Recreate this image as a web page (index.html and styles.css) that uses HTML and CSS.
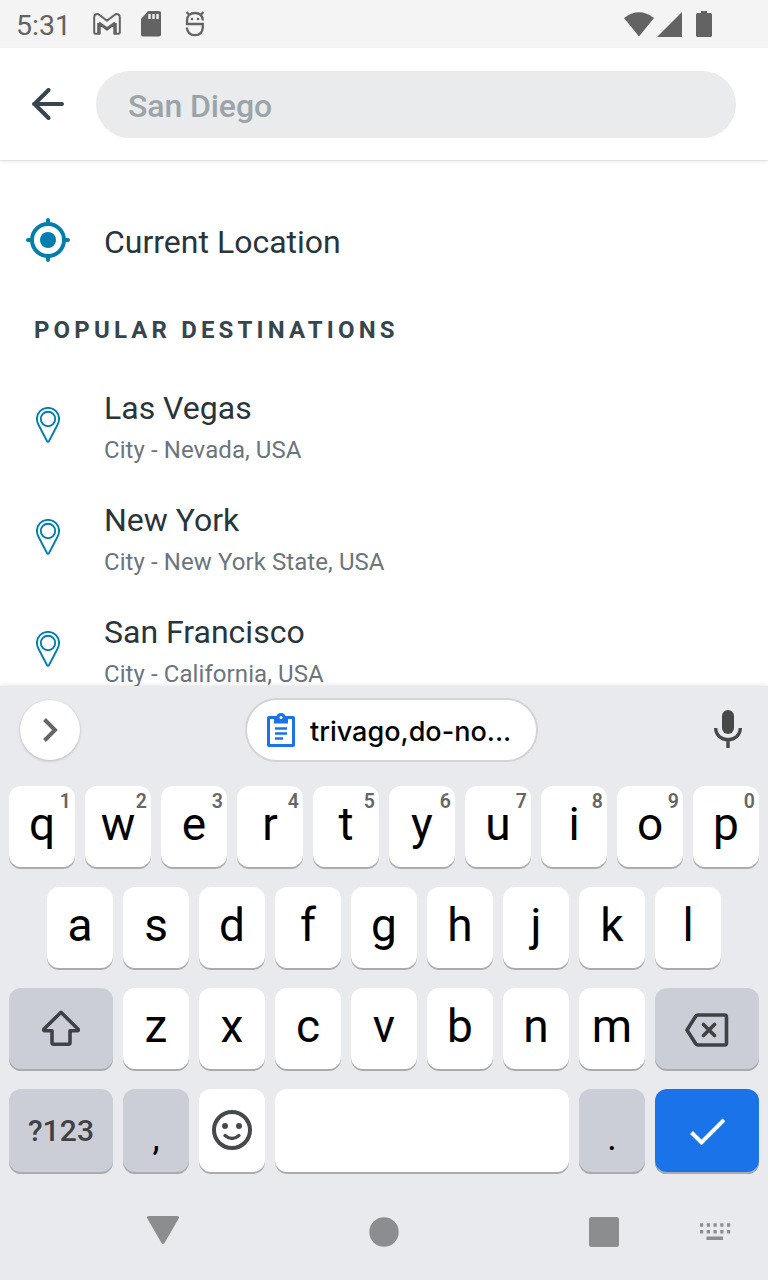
FILE: index.html
```html
<!DOCTYPE html>
<html lang="en">
<head>
<meta charset="utf-8">
<title>Destination search</title>
<link rel="stylesheet" href="styles.css">
</head>
<body>
<div class="screen">
  <div class="status">
    <span class="clock">5:31</span>
    <svg class="gmail" width="28" height="22" viewBox="0 0 28 22" fill="none" stroke="#636363" stroke-width="2" stroke-linejoin="round"><path d="M1.200 4C1.200 1 4.500 .3 6.500 2L14 7.800 21.500 2C23.500 .3 26.800 1 26.800 4V19.500Q26.800 20.800 25.500 20.800H21.300V11L14 16.800 6.700 11V20.800H2.500Q1.200 20.800 1.200 19.500Z"/><path d="M5.400 10v10M22.600 10v10M6 9.700L14 15.500 22 9.700" stroke-width="2.400"/></svg>
    <svg class="sd" width="20" height="26" viewBox="0 0 20 26"><path fill="#636363" d="M7 0h11q2 0 2 2v21.500q0 2-2 2H2q-2 0-2-2V8z"/><path d="M8.500 3v5M12.500 3v5M16.500 3v5" stroke="#f4f4f4" stroke-width="2.400"/></svg>
    <svg class="droid" width="20" height="26" viewBox="0 0 20 26" fill="none" stroke="#636363" stroke-width="2.300"><path d="M17.800 9.500C17.500 4.500 14.500 2 10 2S2 4.500 2 9.500V13H17.800V16.500C17.500 21.500 14.500 24.200 10 24.200S2.300 21.500 1.800 16.500M1.500 1l3.500 3.500M18.500 1L15 4.500"/><circle cx="7" cy="8" r="1.300" fill="#636363" stroke="none"/><circle cx="13" cy="8" r="1.300" fill="#636363" stroke="none"/></svg>
    <svg class="signals" width="90" height="28" viewBox="0 0 90 28" fill="#636363"><path d="M0 7Q15-4.500 30 7L15 25.500z"/><path d="M33 26L58 1V26z"/><path d="M77 0h6v2h3.500q1.500 0 1.500 1.500v21q0 1.500-1.500 1.500h-13q-1.500 0-1.500-1.500v-21q0-1.500 1.500-1.500H77z"/></svg>
  </div>
  <header class="header">
    <svg class="back" width="32" height="32" viewBox="0 0 32 32" fill="none" stroke="#37454d" stroke-width="4" stroke-linecap="round" stroke-linejoin="round"><path d="M30 16H2M16.500 2L2.500 16l14 14"/></svg>
    <div class="search">San Diego</div>
  </header>
  <main class="content">
    <div class="current">
      <svg width="44" height="44" viewBox="0 0 44 44" fill="none" stroke="#007faf" stroke-width="4" stroke-linecap="round"><circle cx="22" cy="22" r="16"/><circle cx="22" cy="22" r="8" fill="#007faf" stroke="none"/><path d="M22 2v4M22 38v4M2 22h4M38 22h4"/></svg>
      <span class="place">Current Location</span>
    </div>
    <h2 class="heading">POPULAR DESTINATIONS</h2>
    <div class="dest">
      <svg class="pin" width="24" height="36" viewBox="0 0 24 36"><path d="M12 .9C5.500 .9 .9 5.800 .9 12c0 3 1 4.600 2.200 7l8 15.300q.9 1.400 1.800 0L20.900 19c1.200-2.400 2.200-4 2.200-7C23.100 5.800 18.500 .9 12 .9z"/><circle cx="12" cy="12" r="7.200"/></svg>
      <div><div class="place">Las Vegas</div><div class="region">City - Nevada, USA</div></div>
    </div>
    <div class="dest">
      <svg class="pin" width="24" height="36" viewBox="0 0 24 36"><path d="M12 .9C5.500 .9 .9 5.800 .9 12c0 3 1 4.600 2.200 7l8 15.300q.9 1.400 1.800 0L20.900 19c1.200-2.400 2.200-4 2.200-7C23.100 5.800 18.500 .9 12 .9z"/><circle cx="12" cy="12" r="7.200"/></svg>
      <div><div class="place">New York</div><div class="region">City - New York State, USA</div></div>
    </div>
    <div class="dest">
      <svg class="pin" width="24" height="36" viewBox="0 0 24 36"><path d="M12 .9C5.500 .9 .9 5.800 .9 12c0 3 1 4.600 2.200 7l8 15.300q.9 1.400 1.800 0L20.900 19c1.200-2.400 2.200-4 2.200-7C23.100 5.800 18.500 .9 12 .9z"/><circle cx="12" cy="12" r="7.200"/></svg>
      <div><div class="place">San Francisco</div><div class="region">City - California, USA</div></div>
    </div>
  </main>
  <section class="keyboard">
    <div class="suggest">
      <div class="expand"><svg width="16" height="24" viewBox="0 0 16 24" fill="none" stroke="#666" stroke-width="4"><path d="M2.500 1.500L13 12 2.500 22.500"/></svg></div>
      <div class="chip">
        <svg width="30" height="34" viewBox="0 0 30 34"><path fill="#1a73e8" d="M3 3h7.500Q11.500 0 15 0t4.500 3H27q2 0 2 2v27q0 2-2 2H3q-2 0-2-2V5q0-2 2-2z"/><path fill="#fff" d="M4 6h4v4.500h14V6h4v25H4z"/><circle cx="15" cy="4.500" r="1.500" fill="#fff"/><path d="M9 15.500h12M9 20.500h12M9 25.500h8" stroke="#1a73e8" stroke-width="2.600"/></svg>
        <span>trivago,do-no...</span>
      </div>
      <svg class="mic" width="28" height="38" viewBox="0 0 28 38"><rect x="8" width="12" height="24" rx="6" fill="#47484a"/><path d="M1.700 18c0 7 5.500 11.700 12.300 11.700S26.300 25 26.300 18M14 29v9" fill="none" stroke="#47484a" stroke-width="3.400"/></svg>
    </div>
    <div class="keys">
      <div class="row">
        <div class="key">q<sup>1</sup></div><div class="key">w<sup>2</sup></div><div class="key">e<sup>3</sup></div><div class="key">r<sup>4</sup></div><div class="key">t<sup>5</sup></div><div class="key">y<sup>6</sup></div><div class="key">u<sup>7</sup></div><div class="key">i<sup>8</sup></div><div class="key">o<sup>9</sup></div><div class="key">p<sup>0</sup></div>
      </div>
      <div class="row">
        <div class="key">a</div><div class="key">s</div><div class="key">d</div><div class="key">f</div><div class="key">g</div><div class="key">h</div><div class="key">j</div><div class="key">k</div><div class="key">l</div>
      </div>
      <div class="row">
        <div class="key wide gray icon"><svg width="38" height="36" viewBox="0 0 38 36" fill="none" stroke="#404144" stroke-width="3.600" stroke-linejoin="round"><path d="M19 2.300L2 19q-1 1.700 1 1.700H10V32.500q0 1.700 1.700 1.700H26.300q1.700 0 1.700-1.700V20.700h7q2 0 1-1.700z"/></svg></div>
        <div class="key">z</div><div class="key">x</div><div class="key">c</div><div class="key">v</div><div class="key">b</div><div class="key">n</div><div class="key">m</div>
        <div class="key wide gray erase"><svg width="44" height="34" viewBox="0 0 44 34" fill="none" stroke="#404144" stroke-width="3.600" stroke-linejoin="round" stroke-linecap="round"><path d="M13 2H39.500q2 0 2 2V30q0 2-2 2H13Q11.500 32 10.700 30.800L2 17l8.700-13.800Q11.500 2 13 2zM18.500 11.500l11 11M29.500 11.500l-11 11"/></svg></div>
      </div>
      <div class="row last">
        <div class="key wide gray symbols">?123</div>
        <div class="key gray punct">,</div>
        <div class="key icon"><svg width="40" height="40" viewBox="0 0 40 40" fill="none" stroke="#47484a" stroke-width="4" stroke-linecap="round"><circle cx="20" cy="20" r="18"/><circle cx="13" cy="16" r="3" fill="#47484a" stroke="none"/><circle cx="27" cy="16" r="3" fill="#47484a" stroke="none"/><path d="M13 25.500Q20 31.500 27 25.500" stroke-width="3.400"/></svg></div>
        <div class="key space"></div>
        <div class="key gray punct">.</div>
        <div class="key wide enter erase"><svg width="36" height="28" viewBox="0 0 36 28" fill="none" stroke="#fff" stroke-width="4"><path d="M2.500 14.500L12.500 24.500 35 2"/></svg></div>
      </div>
    </div>
    <nav class="nav">
      <svg width="768" height="40" viewBox="0 0 768 40" fill="#8c8d8f"><path d="M149 4H177q3 0 1.700 2.500L164.500 31q-1.500 2-3 0L147.300 6.500Q146 4 149 4z"/><circle cx="384" cy="20" r="14.700"/><rect x="589" y="5" width="30" height="30" rx="2.500"/><path d="M700 13H731M700 19.700H731" fill="none" stroke="#8c8d8f" stroke-width="3.400" stroke-dasharray="3.200 3.550"/><path d="M706.500 24.500h16.500v3.500h-16.500z"/></svg>
    </nav>
  </section>
</div>
</body>
</html>
```
FILE: styles.css
```css
* { box-sizing: border-box; }
body { margin: 0; font-family: Roboto, sans-serif; background: #fff; }
svg { display: block; flex: none; }
.screen { width: 768px; height: 1280px; display: flex; flex-direction: column; overflow: hidden; }
.status { height: 48px; flex: none; background: #f4f4f4; display: flex; align-items: flex-start; padding: 11px 54px 0 16px; color: #636363; }
.clock { font-size: 28.5px; line-height: 30px; width: 76px; }
.gmail { margin: 2px 0 0 1px; }
.sd { margin-left: 20px; }
.droid { margin-left: 24px; }
.signals { margin-left: auto; }
.header { height: 113px; flex: none; display: flex; align-items: flex-start; padding: 23px 32px 0; border-bottom: 1px solid #dfe1e2; box-shadow: 0 1px 3px rgba(0,0,0,.07); }
.back { margin: 17px 32px 0 0; }
.search { width: 640px; height: 67px; border-radius: 34px; background: #eaebed; padding-left: 32px; font-size: 32px; font-weight: 500; letter-spacing: -.1px; line-height: 70px; color: #9ba4a8; }
.content { flex: none; height: 525px; }
.current { display: flex; gap: 34px; padding: 57px 0 0 26px; align-items: flex-start; height: 119px; }
.current .place { margin-top: 5px; }
.place { font-size: 32px; line-height: 38px; color: #29343b; }
.heading { margin: 36px 0 25px 34px; font-size: 24px; line-height: 28px; font-weight: 700; letter-spacing: 4.15px; color: #37454d; }
.dest { height: 112px; display: flex; gap: 44px; padding: 20px 36px 0; }
.pin { margin-top: 18px; fill: none; stroke: #007faf; stroke-width: 1.9px; }
.region { margin-top: 9px; font-size: 24px; line-height: 28px; letter-spacing: .08px; color: #6b757b; }
.keyboard { position: relative; flex: none; height: 594px; background: #e8eaed; box-shadow: 0 0 5px rgba(0,0,0,.14); }
.suggest { height: 100px; display: flex; padding: 12px 26px 0 20px; align-items: flex-start; }
.expand { width: 60px; height: 60px; margin-top: 2px; border-radius: 50%; background: #fff; box-shadow: 0 1px 3px rgba(0,0,0,.22); display: flex; align-items: center; justify-content: center; }
.chip { width: 293px; height: 64px; margin-left: 165px; border: 2px solid #d3d4d6; border-radius: 32px; background: #fff; display: flex; align-items: center; gap: 14px; padding-left: 19px; font-family: Inter, sans-serif; font-size: 27px; font-weight: 500; color: #000; }
.chip span { padding-top: 3px; }
.mic { margin: 12px 0 0 auto; }
.keys { display: flex; flex-direction: column; gap: 18px; }
.row { display: flex; justify-content: center; gap: 10px; height: 83px; }
.key { position: relative; width: 66px; border-radius: 12px; background: #fff; box-shadow: inset 0 -2px 0 #a9abae; display: flex; align-items: center; justify-content: center; padding-bottom: 7px; font-size: 46px; line-height: 54px; color: #000; }
.key sup { position: absolute; right: 4px; top: 4px; font-size: 19.5px; line-height: 24px; font-weight: 600; color: #666; }
.wide { width: 104px; }
.gray { background: #cbced6; }
.last { height: 85px; }
.icon { padding-bottom: 3px; }
.erase { padding-bottom: 0; }
.symbols { font-size: 30px; font-weight: 500; padding-bottom: 1px; color: #404144; letter-spacing: .1px; }
.punct { align-items: flex-end; font-size: 36px; padding-bottom: 9px; }
.space { width: 294px; }
.enter { background: #1a73e8; box-shadow: inset 0 -2px 0 #a9abae; }
.nav { padding-top: 38px; }
```
